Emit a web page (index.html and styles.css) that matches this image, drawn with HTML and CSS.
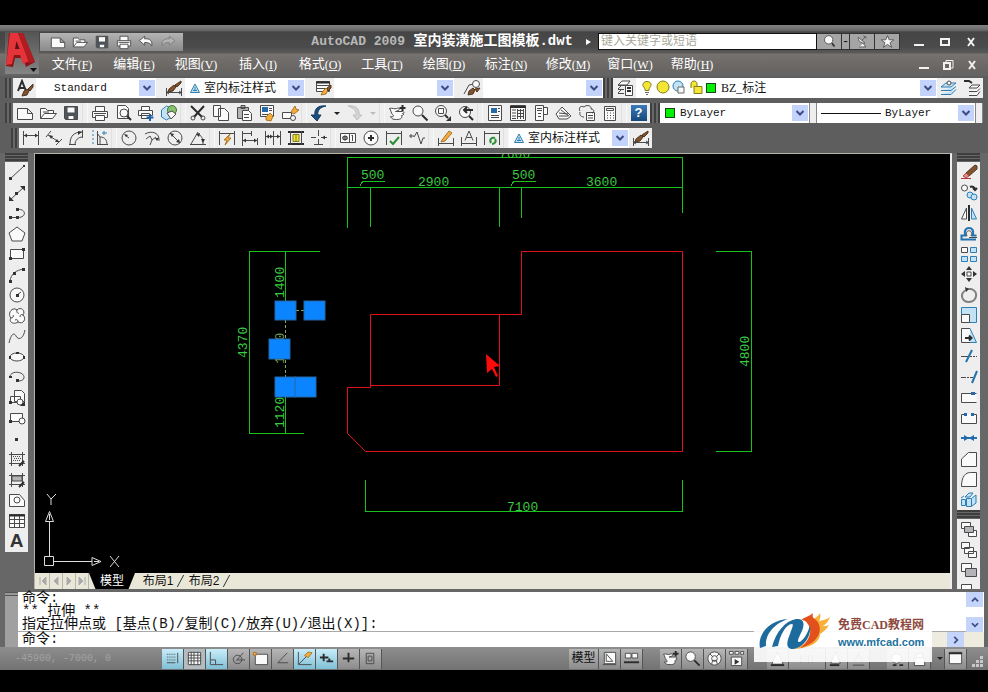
FILE: index.html
```html
<!DOCTYPE html>
<html lang="zh-CN">
<head>
<meta charset="utf-8">
<title>AutoCAD 2009 室内装潢施工图模板.dwt</title>
<link rel="stylesheet" href="styles.css">
</head>
<body>
<svg class="sprite" aria-hidden="true">
  <symbol id="new" viewBox="0 0 18 18"><path class="w" d="M1.500 4.500h10l5 5v6h-15zM11.500 4.500v5h5"/></symbol>
  <symbol id="open" viewBox="0 0 18 18"><path class="w" d="M1.500 14.500v-10h5l2 2h6v3M1.500 14.500l4-5h12l-4 5z"/><path d="M4 8h6"/></symbol>
  <symbol id="save" viewBox="0 0 18 18"><path class="d" d="M2.500 2.500h13v13h-12l-1-1z"/><path class="w" d="M5 3h8v6H5zM6 11.500h6v4H6z"/></symbol>
  <symbol id="print" viewBox="0 0 18 18"><path class="w" d="M4.500 7v-4.500h9v4.500M1.500 7.500h15v6h-15z"/><path class="w" d="M4.500 11.500h9v5h-9z"/><path d="M3 9.500h12"/></symbol>
  <symbol id="pan" viewBox="0 0 18 18"><path class="w" d="M1.500 4.500c3-1 5 1 7 0s4 0 2 2l-3 1h7c2 0 2 2 0 2 2 0 1 2-1 2 1 2 0 4-5 4-4 0-5-1-6-3 3 1 4-1 2-2-2-2-1-4-3-6z"/><path class="k" d="M14.500 1v6M11.500 4h6"/></symbol>
  <symbol id="lens" viewBox="0 0 18 18"><circle class="w" cx="7" cy="7" r="5"/><path class="k" d="M11 11l5.500 5.500"/></symbol>
  <symbol id="dimbrush" viewBox="0 0 18 18"><path d="M1.500 9v8M16.500 9v8M1.500 13.500h15M4 12l-2.500 1.500 2.500 1.500M14 12l2.500 1.500-2.500 1.500"/><path class="n" d="M4 10l5-4 2 2-3 4-5 1zM10 6l6-4v2l-4 4z"/></symbol>
  <symbol id="tri" viewBox="0 0 12 12"><path class="s" d="M6 2L1.500 10.500h9zM6 5v3.500M4 8.500h4"/></symbol>
  <symbol id="down" viewBox="0 0 16 16"><path class="chev" d="M4.500 6L8 9.500 11.500 6"/></symbol>
</svg>

<div class="app">
  <header class="header">
    <button class="logo" aria-label="菜单浏览器">
      <svg viewBox="0 0 34 42" aria-hidden="true">
        <path fill="#8d1518" d="M1 34L4 1h14l12 29-9 5-3-9h-8l-2 9z"/>
        <path fill="#e5333a" d="M1 33L5 1h8l11 28-6 3-3-9H9l-2 9z"/>
        <path fill="#541518" d="M10 17l1.500-8 3 8z"/>
        <path fill="#b01c22" d="M13 1h5l12 29-6 1z"/>
        <path fill="#111" d="M25 36h7l-3.500 4z"/>
      </svg>
    </button>
    <div class="bars">
      <div class="titlebar">
        <div class="quick">
          <button aria-label="新建"><svg class="i"><use href="#new"/></svg></button>
          <button aria-label="打开"><svg class="i"><use href="#open"/></svg></button>
          <button aria-label="保存"><svg class="i"><use href="#save"/></svg></button>
          <button aria-label="打印"><svg class="i"><use href="#print"/></svg></button>
          <button aria-label="放弃"><svg class="i" viewBox="0 0 18 18"><path class="w" d="M1.500 7.500l6-5v3c6-1 9 3 8 8-1-3-4-4-8-4v3z"/></svg></button>
          <button aria-label="重做"><svg class="i" viewBox="0 0 18 18"><path class="l" d="M16.500 7.500l-6-5v3c-6-1-9 3-8 8 1-3 4-4 8-4v3z"/></svg></button>
        </div>
        <h1 class="caption"><span>AutoCAD 2009</span> 室内装潢施工图模板.dwt</h1>
        <div class="search">
          <i class="play"></i>
          <input type="text" aria-label="搜索" placeholder="键入关键字或短语">
          <button aria-label="搜索"><svg class="i" viewBox="0 0 18 18"><circle class="w" cx="8" cy="7" r="5"/><path class="k" d="M12 11l3 4"/></svg></button>
          <button class="slim" aria-label="搜索范围">-</button>
          <button aria-label="通讯中心"><svg class="i" viewBox="0 0 18 18"><path class="w" d="M4 4c0 5 3 7 8 7zM5 15.500h8l-3-4"/><path d="M8 8l5-5M10 2l4 3"/></svg></button>
          <button aria-label="收藏夹"><svg class="i" viewBox="0 0 18 18"><path class="w" d="M9 2l2 5h5.500l-4.500 3.500 2 5.500-5-3.500L4 16l2-5.500L1.500 7H7z"/></svg></button>
        </div>
        <div class="winbtns">
          <button aria-label="最小化"><svg viewBox="0 0 12 12"><path d="M1 9h10"/></svg></button>
          <button aria-label="最大化"><svg viewBox="0 0 12 12"><path d="M2 3h8v6H2z"/></svg></button>
          <button aria-label="关闭"><svg viewBox="0 0 12 12"><path d="M3 2l6 8M9 2l-6 8"/></svg></button>
        </div>
      </div>
      <div class="menubar">
        <nav>
          <button>文件<span>(<u>F</u>)</span></button>
          <button>编辑<span>(<u>E</u>)</span></button>
          <button>视图<span>(<u>V</u>)</span></button>
          <button>插入<span>(<u>I</u>)</span></button>
          <button>格式<span>(<u>O</u>)</span></button>
          <button>工具<span>(<u>T</u>)</span></button>
          <button>绘图<span>(<u>D</u>)</span></button>
          <button>标注<span>(<u>N</u>)</span></button>
          <button>修改<span>(<u>M</u>)</span></button>
          <button>窗口<span>(<u>W</u>)</span></button>
          <button>帮助<span>(<u>H</u>)</span></button>
        </nav>
        <div class="winbtns doc">
          <button aria-label="最小化图形"><svg viewBox="0 0 12 12"><path d="M1 9h10"/></svg></button>
          <button aria-label="还原图形"><svg viewBox="0 0 12 12"><path class="thin" d="M4 3V1.500h7V9H9"/><path d="M2 4h6v6H2z"/></svg></button>
          <button aria-label="关闭图形"><svg viewBox="0 0 12 12"><path d="M3 2l6 8M9 2l-6 8"/></svg></button>
        </div>
      </div>
    </div>
  </header>

  <div class="toolbars">
    <div class="row">
      <i class="grip"></i>
      <div class="panel">
        <button aria-label="文字样式"><svg class="i" viewBox="0 0 18 18"><path class="k" d="M2 12L6 2l4 10M3.500 9h5"/><path class="n" d="M8 12l3-2 2 2-2 4-5 1zM12 10l5-5v3l-3 4z"/></svg></button>
        <label class="combo text"><select aria-label="文字样式"><option>Standard</option></select><svg class="drop"><use href="#down"/></svg></label>
      </div>
      <div class="panel gap">
        <button aria-label="标注样式"><svg class="i"><use href="#dimbrush"/></svg></button>
        <label class="combo"><svg class="mark"><use href="#tri"/></svg><select aria-label="标注样式"><option>室内标注样式</option></select><svg class="drop"><use href="#down"/></svg></label>
      </div>
      <div class="panel gap">
        <button aria-label="表格样式"><svg class="i" viewBox="0 0 18 18"><path class="w" d="M2.500 2.500h13v10h-13z"/><path class="k" d="M2 3.500h14"/><path d="M3 6.500h12M3 9.500h8"/><path class="o" d="M9 12l3-3 2 2-2 4-5 1z"/><path class="n" d="M13 9l4-3v3l-3 3z"/></svg></button>
        <label class="combo"><select aria-label="表格样式"><option></option></select><svg class="drop"><use href="#down"/></svg></label>
      </div>
      <div class="panel gap">
        <button aria-label="多重引线样式"><svg class="i" viewBox="0 0 18 18"><path d="M1 15L6 6l5-1"/><circle class="w" cx="13" cy="5" r="3.500"/><path class="n" d="M6 12l4-3 2 2-2 4-5 1zM12 10l5-1-3 4z"/></svg></button>
        <label class="combo"><select aria-label="多重引线样式"><option></option></select><svg class="drop"><use href="#down"/></svg></label>
      </div>
      <i class="grip wide"></i>
      <div class="panel grow">
        <button aria-label="图层特性管理器"><svg class="i" viewBox="0 0 18 18"><path class="w" d="M2 6l4-4h8l-3 4zM2 10l3-3M2 14l3-3M2 6.500h8M2 10.500h6M2 14.500h6"/><path class="w" d="M9.500 6.500h7v10h-7z"/><path class="k" d="M11 9h4M11 12h4"/></svg></button>
        <label class="combo layer">
          <svg class="states" viewBox="0 0 64 16" aria-hidden="true">
            <path class="y" d="M7 1.500c5 0 5 5 2 7v2H5v-2c-3-2-3-7 2-7z"/><path d="M5 12.500h4M6 14.500h2"/>
            <circle class="y" cx="23" cy="7" r="6"/>
            <circle class="s" cx="38" cy="6" r="5"/><path class="w" d="M38 7h6v6h-6z"/>
            <path class="y" d="M54 6.500h8v7h-8zM51 8V4c0-4 6-4 6 0v2"/>
          </svg>
          <i class="swatch"></i><select aria-label="图层"><option>BZ_标注</option></select><svg class="drop"><use href="#down"/></svg></label>
        <button aria-label="将对象的图层置为当前"><svg class="i" viewBox="0 0 18 18"><path class="s" d="M1 8l5-4h10l-5 4zM1 11.500h10l5-4M1 15.500h10l5-5"/><circle class="w" cx="9" cy="4" r="2"/></svg></button>
        <button aria-label="上一个图层"><svg class="i" viewBox="0 0 18 18"><path class="w" d="M6 9l3-3h8l-3 3zM6 12.500h8l3-3M6 16.500h8l3-4"/><path class="k" d="M1 2h5l3 2"/></svg></button>
      </div>
    </div>

    <div class="row">
      <i class="grip"></i>
      <div class="panel">
        <button aria-label="新建"><svg class="i"><use href="#new"/></svg></button>
        <button aria-label="打开"><svg class="i"><use href="#open"/></svg></button>
        <button aria-label="保存"><svg class="i"><use href="#save"/></svg></button>
        <i class="sep"></i>
        <button aria-label="打印"><svg class="i"><use href="#print"/></svg></button>
        <button aria-label="打印预览"><svg class="i" viewBox="0 0 18 18"><path class="w" d="M3.500 1.500h8l3 3v10h-11z"/><circle class="w" cx="10" cy="9" r="4"/><path class="k" d="M13 12l4 4"/></svg></button>
        <button aria-label="发布"><svg class="i" viewBox="0 0 18 18"><path class="w" d="M4.500 6V2.500h8V6M1.500 6.500h14v5h-14zM4.500 9.500h8v5h-8z"/><path class="bk" d="M13 10v7M9.500 13.500h7"/></svg></button>
        <button aria-label="三维 DWF"><svg class="i" viewBox="0 0 18 18"><path class="s" d="M1.500 6l5-4 5 2v9l-5 3-5-3z"/><circle class="g" cx="12" cy="6" r="4.500"/><path class="w" d="M7 9l5-2 4 3-5 5z"/></svg></button>
        <i class="sep"></i>
        <button aria-label="剪切"><svg class="i" viewBox="0 0 18 18"><path class="k" d="M2 2l11 11M15 2L5 13"/><circle cx="4" cy="14" r="2"/><circle cx="14" cy="14" r="2"/></svg></button>
        <button aria-label="复制"><svg class="i" viewBox="0 0 18 18"><path class="w" d="M1.500 1.500h7v11h-7zM6.500 4.500h6l4 4v8h-10z"/></svg></button>
        <button aria-label="粘贴"><svg class="i" viewBox="0 0 18 18"><path class="a" d="M2.500 3.500h11v11h-11zM6 1.500h4v3H6z"/><path class="w" d="M7.500 6.500h6l3 3v7h-9z"/><path d="M9 10.500h5M9 13.500h5"/></svg></button>
        <button aria-label="特性匹配"><svg class="i" viewBox="0 0 18 18"><path class="w" d="M2.500 1.500h13v11h-13z"/><path class="bf" d="M4 3h6v5H4z"/><path d="M11 4.500h3M11 6.500h3M4 10.500h8"/><path class="o" d="M8 13l4-4 3 3-2 5-5-1z"/></svg></button>
        <button aria-label="块编辑器"><svg class="i" viewBox="0 0 18 18"><path class="w" d="M1.500 8.500h9v6h-9z"/><circle class="w" cx="12" cy="14" r="2.500"/><path class="o" d="M10 8l4-6 1 3 3 1-5 4z"/></svg></button>
        <i class="sep"></i>
        <button aria-label="放弃"><svg class="i" viewBox="0 0 18 18"><path class="v" d="M16 2C8 1 4 5 5 11H1l6 6 4-6H8C7 7 10 3 16 2z"/></svg></button>
        <button class="arrow" aria-label="放弃列表"><i></i></button>
        <button aria-label="重做"><svg class="i off" viewBox="0 0 18 18"><path class="l" d="M2 2c8-1 12 3 11 9h3l-5 5-4-5h3C11 7 8 4 2 2z"/></svg></button>
        <button class="arrow off" aria-label="重做列表"><i></i></button>
        <i class="sep"></i>
        <button aria-label="实时平移"><svg class="i"><use href="#pan"/></svg></button>
        <button aria-label="实时缩放"><svg class="i"><use href="#lens"/></svg></button>
        <button aria-label="窗口缩放"><svg class="i" viewBox="0 0 18 18"><circle class="w" cx="7" cy="7" r="5.500"/><path d="M4.500 4.500h5v5h-5z"/><path class="k" d="M11 11l3 3"/><path class="f" d="M17 12v5h-5z"/></svg></button>
        <button aria-label="缩放上一个"><svg class="i" viewBox="0 0 18 18"><circle class="w" cx="8" cy="8" r="5.500"/><path class="k" d="M12 12l4 4M7 6h9M10 3L7 6l3 3"/></svg></button>
        <i class="sep"></i>
        <button aria-label="特性"><svg class="i" viewBox="0 0 18 18"><path class="w" d="M2.500 1.500h13v15h-13z"/><path class="bf" d="M5 4h6v5H5z"/><path d="M12 4.500h2M12 7.500h2M5 11.500h8M5 13.500h8"/></svg></button>
        <button aria-label="设计中心"><svg class="i" viewBox="0 0 18 18"><path class="w" d="M1.500 1.500h15v15h-15z"/><path class="k" d="M1 3h16"/><path d="M3 6h4M3 9h4M3 12h4M3 14.500h4M8 6.500h7M8 9.500h7M8 12.500h7M8.500 5v10M11.500 5v10M14.500 5v10"/></svg></button>
        <button aria-label="工具选项板"><svg class="i" viewBox="0 0 18 18"><path class="w" d="M3.500 1.500h8v15h-8zM11.500 3.500h4v7h-4z"/><path d="M5 4.500h5M5 6.500h5M6 9.500h3M6 12.500h3"/></svg></button>
        <button aria-label="图纸集管理器"><svg class="i" viewBox="0 0 18 18"><path class="w" d="M1 10l6-7 9 9-4 3H4zM4 12h9"/><path d="M4 9l9 1M6 6l8 6"/></svg></button>
        <button aria-label="标记集管理器"><svg class="i" viewBox="0 0 18 18"><path class="w" d="M8.500 8.500h8v8h-8z"/><path d="M2 7c-2-3 1-6 4-4 3-3 8-1 7 2 4 0 3 4 1 4M2 8c-1 4 2 5 4 5M10 11.500h5M10 14h5"/></svg></button>
        <button aria-label="快速计算器"><svg class="i" viewBox="0 0 18 18"><path class="w" d="M3.500 2.500h11v14h-11z"/><path d="M5.500 4.500h7v2h-7zM6 9h1M9 9h1M12 9h1M6 11.500h1M9 11.500h1M12 11.500h1M6 14h1M9 14h1M12 14h1"/></svg></button>
        <i class="sep"></i>
        <button class="help" aria-label="帮助"><b>?</b></button>
      </div>
      <i class="grip wide"></i>
      <div class="panel props">
        <label class="combo color"><i class="swatch"></i><select aria-label="颜色"><option>ByLayer</option></select><svg class="drop"><use href="#down"/></svg></label>
        <i class="rail"></i>
        <label class="combo line"><i class="stroke"></i><select aria-label="线型"><option>ByLayer</option></select><svg class="drop"><use href="#down"/></svg></label>
        <i class="rail"></i>
      </div>
    </div>

    <div class="row inset">
      <i class="grip"></i>
      <div class="panel">
        <button aria-label="线性"><svg class="i" viewBox="0 0 18 18"><path d="M1.500 2v14M16.500 2v14M2 6.500h14"/><path class="f" d="M2 6.500l3-2v4zM16 6.500l-3-2v4z"/></svg></button>
        <button aria-label="对齐"><svg class="i" viewBox="0 0 18 18"><path d="M1 8l5-6M11 16l6-6M3 6l11 7"/><path class="f" d="M4 6l4 1-2 3zM14 13l-4 0 2-3z"/></svg></button>
        <button aria-label="弧长"><svg class="i" viewBox="0 0 18 18"><path d="M2 15C2 7 6 3 14 3M7 16c0-5 3-8 8-8M1 15.500h7M14.500 1v8"/><path class="f" d="M14 3l-4-1v4z"/></svg></button>
        <button aria-label="坐标"><svg class="i" viewBox="0 0 18 18"><path class="s" d="M1 2h2M1 6h2M1 10h2M1 14h2M13 2v4M11 4h5"/><path d="M6.500 2v14M6 15.500h11M6 4l3 4M9 8c5 0 7 3 7 8M9 8v7"/></svg></button>
        <i class="sep"></i>
        <button aria-label="半径"><svg class="i" viewBox="0 0 18 18"><circle cx="9" cy="9" r="7"/><path d="M5 6l4 3"/><path class="f" d="M4 5l4 1-2 2z"/></svg></button>
        <button aria-label="折弯"><svg class="i" viewBox="0 0 18 18"><path d="M2 5c7-4 15-1 14 7M3 10l4-3 2 4 4-3"/><path class="f" d="M16 9l-4 0 2 3z"/><path d="M9 11l-2 5"/></svg></button>
        <button aria-label="直径"><svg class="i" viewBox="0 0 18 18"><circle cx="9" cy="9" r="7"/><path d="M4 4l10 10"/><path class="f" d="M4 4l4 1-2 3zM14 14l-4-1 3-3z"/></svg></button>
        <button aria-label="角度"><svg class="i" viewBox="0 0 18 18"><path d="M1 15.500h16M2 15L9 3M8 5c5 1 6 5 6 10"/><path class="f" d="M14 14l-2-4h4zM7 5l4-1-1 4z"/></svg></button>
        <i class="sep"></i>
        <button aria-label="快速标注"><svg class="i" viewBox="0 0 18 18"><path d="M1.500 2v14M16.500 2v14M2 4.500h14"/><path class="o" d="M12 5l-6 6h3l-2 5 6-7h-3z"/></svg></button>
        <button aria-label="基线"><svg class="i" viewBox="0 0 18 18"><path d="M1.500 2v15M10.500 2v5M16.500 9v7M2 4.500h8M2 11.500h14"/><path class="f" d="M2 11.500l3-2v4zM16 11.500l-3-2v4z"/></svg></button>
        <button aria-label="连续"><svg class="i" viewBox="0 0 18 18"><path d="M1.500 2v14M9.500 2v14M16.500 2v14M2 7.500h14"/><path class="f" d="M2 7.500l3-2v4zM9 7.500l-3-2v4zM16 7.500l-3-2v4z"/></svg></button>
        <button aria-label="标注间距"><svg class="i" viewBox="0 0 18 18"><path class="k" d="M1 3h16M1 15h16"/><path d="M3.500 2v14M14.500 2v14"/><path class="y" d="M6 5.500h6v7H6zM9 6v6"/></svg></button>
        <button aria-label="标注打断"><svg class="i" viewBox="0 0 18 18"><path d="M8.500 1v6M8.500 10v6M1 8.500h5M11 8.500h6M4 15.500h9"/><path class="f" d="M12 8.500l3-2v4z"/></svg></button>
        <i class="sep"></i>
        <button aria-label="公差"><svg class="i" viewBox="0 0 18 18"><path class="w" d="M1.500 4.500h15v9h-15zM10.500 5v8"/><path d="M3 9h6M6 6v6M4 7.500h4v3H4zM12.500 7l1-1v6"/></svg></button>
        <button aria-label="圆心标记"><svg class="i" viewBox="0 0 18 18"><circle class="w" cx="9" cy="9" r="7"/><path class="k" d="M9 6v6M6 9h6"/></svg></button>
        <button aria-label="检验"><svg class="i" viewBox="0 0 18 18"><path d="M1.500 2v14M16.500 2v14M2 4.500h14"/><path class="gk" d="M5 12l3 3 6-7"/></svg></button>
        <button aria-label="折弯线性"><svg class="i" viewBox="0 0 18 18"><path d="M1 7h5M3 5v4M6 8l3-5 4 12 2-6h2"/></svg></button>
        <i class="sep"></i>
        <button aria-label="编辑标注"><svg class="i" viewBox="0 0 18 18"><path d="M1.500 9v8M16.500 9v8M2 14.500h14"/><path class="o" d="M5 11l7-9 3 2-7 8-4 1z"/></svg></button>
        <button aria-label="编辑标注文字"><svg class="i" viewBox="0 0 18 18"><path d="M1.500 8v9M16.500 8v9M2 14.500h14M5 11.500L9 2l4 9.500M6.500 8.500h5"/></svg></button>
        <button aria-label="标注更新"><svg class="i" viewBox="0 0 18 18"><path d="M1.500 2v14M16.500 2v14M2 4.500h14"/><path class="gk" d="M8 14c-2-4 1-6 4-5M12 10c2 3-1 5-3 5"/></svg></button>
        <i class="sep"></i>
        <label class="combo"><svg class="mark"><use href="#tri"/></svg><select aria-label="当前标注样式"><option>室内标注样式</option></select><svg class="drop"><use href="#down"/></svg></label>
        <button aria-label="标注样式管理"><svg class="i"><use href="#dimbrush"/></svg></button>
      </div>
    </div>
  </div>

  <main class="work">
    <div class="side">
      <i class="hgrip"></i>
      <div class="vpanel draw">
        <button aria-label="直线"><svg class="i" viewBox="0 0 18 18"><path d="M2 16L16 3"/><path class="f" d="M1 14h3v3H1zM15 2h2v2h-2z"/></svg></button>
        <button aria-label="构造线"><svg class="i" viewBox="0 0 18 18"><path d="M2 16L16 3"/><path class="f" d="M1 12v5h5zM17 2h-5l5 5zM7 8h3v3H7z"/></svg></button>
        <button aria-label="多段线"><svg class="i" viewBox="0 0 18 18"><path d="M2 13.500h8c9 0 8-9 0-8"/><path class="f" d="M1 12h3v3H1zM8 12h3v3H8zM8 4h3v3H8z"/></svg></button>
        <button aria-label="正多边形"><svg class="i" viewBox="0 0 18 18"><path class="w" d="M9 2l8 6-3 8H4L1 8z"/></svg></button>
        <button aria-label="矩形"><svg class="i" viewBox="0 0 18 18"><path class="w" d="M2.500 4.500h13v9h-13z"/><path class="f" d="M1 12h3v3H1zM14 3h3v3h-3z"/></svg></button>
        <button aria-label="圆弧"><svg class="i" viewBox="0 0 18 18"><path d="M2 15C3 8 8 4 16 3"/><path class="f" d="M1 14h3v3H1zM5 6h3v3H5zM14 2h3v3h-3z"/></svg></button>
        <button aria-label="圆"><svg class="i" viewBox="0 0 18 18"><circle class="w" cx="9" cy="9" r="7"/><path d="M9 9l4-3"/><path class="f" d="M8 8h3v3H8z"/></svg></button>
        <button aria-label="修订云线"><svg class="i" viewBox="0 0 18 18"><path class="w" d="M9 3c4-4 9 1 6 5 4 4 0 10-5 7-4 3-10 0-7-4-4-4 1-12 6-8z"/><path d="M9 3c-1 2 1 4 2 3M15 8c-2-1-3 0-3 2M10 15c0-2-1-3-3-2M3 11c2 0 3-2 2-3"/></svg></button>
        <button aria-label="样条曲线"><svg class="i" viewBox="0 0 18 18"><path d="M1 16C3 7 6 5 8 9s7 4 9-6"/></svg></button>
        <button aria-label="椭圆"><svg class="i" viewBox="0 0 18 18"><ellipse class="w" cx="9" cy="9" rx="7" ry="4"/><path class="f" d="M1 8h2v3H1zM15 8h2v3h-2zM8 4h3v2H8z"/></svg></button>
        <button aria-label="椭圆弧"><svg class="i" viewBox="0 0 18 18"><path d="M2 9c0-7 15-6 14 1-1 3-4 3-7 3"/><path class="f" d="M1 8h3v2H1zM8 11h3v3H8z"/></svg></button>
        <button aria-label="插入块"><svg class="i" viewBox="0 0 18 18"><path class="w" d="M6.500 1.500h7l3 3v8h-10zM2.500 7.500h10v6h-10z"/><circle class="w" cx="12" cy="13" r="3"/><path class="f" d="M1 12h3v3H1zM17 12v5h-5z"/></svg></button>
        <button aria-label="创建块"><svg class="i" viewBox="0 0 18 18"><path class="w" d="M2.500 4.500h12v8h-12z"/><circle class="w" cx="14" cy="12" r="3"/><path class="f" d="M1 11h3v3H1z"/></svg></button>
        <button aria-label="点"><svg class="i" viewBox="0 0 18 18"><path class="f" d="M7 8h3v3H7z"/></svg></button>
        <button aria-label="图案填充"><svg class="i" viewBox="0 0 18 18"><path d="M1 4.500h16M1 13.500h16M3.500 2v14M14.500 2v14"/><path class="dots" d="M5 6.500h8M6 8.500h8M5 10.500h8"/><path class="k" d="M16 11l-5 5"/></svg></button>
        <button aria-label="渐变色"><svg class="i" viewBox="0 0 18 18"><path class="a" d="M4 5h10v5H4z"/><path d="M1 4.500h16M1 13.500h16M3.500 2v14M14.500 2v14"/><path class="k" d="M16 11l-5 5"/></svg></button>
        <button aria-label="面域"><svg class="i" viewBox="0 0 18 18"><path class="w" d="M1.500 3.500h10l5 6v6h-15z"/><circle class="w" cx="9" cy="9" r="3"/></svg></button>
        <button aria-label="表格"><svg class="i" viewBox="0 0 18 18"><path class="w" d="M1.500 2.500h15v13h-15z"/><path class="k" d="M1 3.500h16"/><path d="M2 7.500h14M2 11.500h14M6.500 4v11M11.500 4v11"/></svg></button>
        <button class="mtext" aria-label="多行文字">A</button>
      </div>
    </div>

    <section class="viewport">
      <svg class="drawing" role="img" aria-label="户型平面图">
        <g transform="translate(-35 -154)">
          <g class="dim">
            <path d="M347.500 228V157.500H682.500V213M347.500 187.500H682.500M370.500 187V227M499.500 187V227M521.500 187V218M360 186l3-5h22M511 186l3-5h22"/>
            <path d="M320 251.500H249.500V433.500H304M285.500 251V301M285.500 397V433"/>
            <path d="M716 251.500H751.500V451.500H716M365.500 480V511.500H682.500V480"/>
            <path class="faint" d="M285.500 320V378M296 310.500h9"/>
            <text x="499" y="158">7600</text>
            <text x="361" y="179">500</text>
            <text x="418" y="186">2900</text>
            <text x="512" y="179">500</text>
            <text x="586" y="186">3600</text>
            <text x="507" y="511">7100</text>
            <text transform="translate(284 298) rotate(-90)">1400</text>
            <text class="soft" transform="translate(284 364) rotate(-90)">1850</text>
            <text transform="translate(284 428) rotate(-90)">1120</text>
            <text transform="translate(247 358) rotate(-90)">4370</text>
            <text transform="translate(749 367) rotate(-90)">4800</text>
          </g>
          <path class="wall" d="M521.500 251.500H682.500V451.500H365.500L347.500 433.500V387.500H370.500V314.500H521.500zM370.500 385.500H499.500V314.500"/>
          <g class="handles">
            <rect x="275" y="301" width="21" height="19"/><rect x="304" y="301" width="21" height="19"/>
            <rect x="269" y="339" width="21" height="20"/><rect x="275" y="377" width="21" height="20"/><rect x="295" y="377" width="21" height="20"/>
          </g>
          <path class="pointer" d="M486 354l14 12-6 1 4 9-2 1-4-8-5 4z"/>
          <g class="ucs">
            <path d="M44.500 556.500h9v9h-9zM49.500 556V522M54 561.500H92M49.500 511.500l4 10h-8zM101 561.500l-9-4v8zM49.500 514v6M94 561.500h5"/>
            <path d="M47 494l4 5v6M56 494l-5 5M110 556l9 11M119 556l-9 11"/>
          </g>
        </g>
      </svg>
      <div class="tabs">
        <button class="nav" aria-label="第一个布局"><svg viewBox="0 0 12 12"><path d="M3 2v8M9 2L5 6l4 4z"/></svg></button>
        <button class="nav" aria-label="上一个布局"><svg viewBox="0 0 12 12"><path d="M8 2L4 6l4 4z"/></svg></button>
        <button class="nav" aria-label="下一个布局"><svg viewBox="0 0 12 12"><path d="M4 2l4 4-4 4z"/></svg></button>
        <button class="nav" aria-label="最后一个布局"><svg viewBox="0 0 12 12"><path d="M3 2l4 4-4 4zM9 2v8"/></svg></button>
        <button class="tab on">模型</button>
        <button class="tab">布局1</button>
        <button class="tab">布局2</button>
      </div>
    </section>

    <div class="side">
      <i class="hgrip"></i>
      <div class="vpanel modify">
        <button aria-label="删除"><svg class="i" viewBox="0 0 18 18"><path class="n" d="M6 10l9-8 2 1v3l-8 7z"/><path class="r" d="M6 10l3 3-3 2-3-2z"/><path class="rk" d="M1 15.500h10"/></svg></button>
        <button aria-label="复制对象"><svg class="i" viewBox="0 0 18 18"><circle class="w" cx="4.500" cy="5" r="3"/><circle class="s" cx="10" cy="12" r="3"/><circle class="s" cx="14" cy="14" r="3"/><path class="k" d="M10 4c2-1 5 0 5 3M13 5l2 2 2-2"/></svg></button>
        <button aria-label="镜像"><svg class="i" viewBox="0 0 18 18"><path class="w" d="M6.500 4v11h-5z"/><path class="s" d="M11.500 4v11h5z"/><path class="k" d="M9 1v16"/></svg></button>
        <button aria-label="偏移"><svg class="i" viewBox="0 0 18 18"><path class="b" d="M16 15.500H1.500v-4h4c-4-10 11-10 7 0h4"/><path d="M17 13.500H9M7 12c-3-7 7-7 4 0"/></svg></button>
        <button aria-label="阵列"><svg class="i" viewBox="0 0 18 18"><path class="w" d="M1.500 2.500h6v5h-6z"/><path class="s" d="M10.500 2.500h6v5h-6zM1.500 11.500h6v5h-6zM10.500 11.500h6v5h-6z"/></svg></button>
        <button aria-label="移动"><svg class="i" viewBox="0 0 18 18"><path class="w" d="M7 7h4v4H7z"/><path class="f" d="M9 1l3 4H6zM9 17l3-4H6zM1 9l4-3v6zM17 9l-4-3v6z"/></svg></button>
        <button aria-label="旋转"><svg class="i" viewBox="0 0 18 18"><path class="h" d="M6 4c-7 4-4 12 3 12 8 0 10-11 2-13H7"/><path class="f" d="M5 1l4 2-3 3z"/></svg></button>
        <button aria-label="缩放"><svg class="i" viewBox="0 0 18 18"><path class="s" d="M1.500 1.500h15v15h-15z"/><path class="w" d="M1.500 8.500h8v8h-8z"/></svg></button>
        <button aria-label="拉伸"><svg class="i" viewBox="0 0 18 18"><path class="w" d="M10 1.500H1.500v14H10"/><path class="s" d="M10 1.500l6.500 14H10"/><path class="k" d="M5 11h6M9 8.500l2.500 2.500L9 13.500"/></svg></button>
        <button aria-label="修剪"><svg class="i" viewBox="0 0 18 18"><path class="b" d="M6 15l6-12"/><path d="M1 9.500h7M10 9.500h2M13 9.500h2M16 9.500h1"/></svg></button>
        <button aria-label="延伸"><svg class="i" viewBox="0 0 18 18"><path class="b" d="M12 15l5-12"/><path d="M1 9.500h5M7 9.500h2M10 9.500h3"/></svg></button>
        <button aria-label="打断于点"><svg class="i" viewBox="0 0 18 18"><path class="w" d="M16.500 14.500h-15v-9h15"/><path class="bf" d="M11 4h4v3h-4z"/></svg></button>
        <button aria-label="打断"><svg class="i" viewBox="0 0 18 18"><path class="w" d="M6 5.500H1.500v9h15v-9H12"/><path class="bf" d="M4 4h3v3H4zM11 4h3v3h-3z"/></svg></button>
        <button aria-label="合并"><svg class="i" viewBox="0 0 18 18"><path class="b" d="M1 9h16"/><path class="bf" d="M4 6l5 3-5 3zM14 6L9 9l5 3z"/></svg></button>
        <button aria-label="倒角"><svg class="i" viewBox="0 0 18 18"><path class="w" d="M1.500 16.500V9l7-6.500h8v14z"/></svg></button>
        <button aria-label="圆角"><svg class="i" viewBox="0 0 18 18"><path class="w" d="M1.500 16.500c0-10 4-14 9-14h6v14z"/></svg></button>
        <button aria-label="分解"><svg class="i" viewBox="0 0 18 18"><path class="s" d="M1.500 8.500h4v6h-4zM6.500 7.500h5v8h-5zM12 7l4-3v8l-4 3M5 6l4-4h4l-3 4zM1 7l3-2"/></svg></button>
      </div>
      <i class="hgrip"></i>
      <div class="vpanel order">
        <button aria-label="前置"><svg class="i" viewBox="0 0 18 18"><path class="w" d="M1.500 2.500h9v6h-9zM8.500 10.500h8v6h-8z"/><path class="a" d="M4.500 6.500h9v6h-9z"/></svg></button>
        <button aria-label="后置"><svg class="i" viewBox="0 0 18 18"><path class="w" d="M4.500 6.500h9v6h-9zM1.500 1.500h8v6h-8zM8.500 10.500h8v6h-8z"/></svg></button>
        <button aria-label="置于对象之上"><svg class="i" viewBox="0 0 18 18"><path class="w" d="M1.500 2.500h10v8h-10z"/><path class="a" d="M5.500 7.500h11v8h-11z"/></svg></button>
        <button aria-label="置于对象之下"><svg class="i" viewBox="0 0 18 18"><path class="w" d="M1.500 2.500h10v8h-10z"/></svg></button>
      </div>
    </div>
  </main>

  <section class="command">
    <i class="cgrip"></i>
    <div class="history">
      <p>命令:</p>
      <p>** 拉伸 **</p>
      <p>指定拉伸点或 [基点(B)/复制(C)/放弃(U)/退出(X)]:</p>
    </div>
    <div class="vscroll">
      <button aria-label="向上滚动"><svg viewBox="0 0 16 16"><path class="chev" d="M4.500 9.500L8 6l3.500 3.500"/></svg></button>
      <button aria-label="向下滚动"><svg><use href="#down"/></svg></button>
    </div>
    <label class="prompt">命令: <input type="text" aria-label="命令"></label>
    <div class="hscroll"><button aria-label="向右滚动"><svg viewBox="0 0 16 16"><path class="chev" d="M6 4.500L9.500 8 6 11.500"/></svg></button></div>
  </section>

  <footer class="status">
    <output>-45900, -7000, 0</output>
    <div class="toggles">
      <button class="on" aria-label="捕捉"><svg class="i" viewBox="0 0 18 18"><path class="dots" d="M3 4.500h9M3 7.500h9M3 10.500h9"/><path d="M14.500 3v11M3 13.500h9"/></svg></button>
      <button class="lit" aria-label="栅格"><svg class="i" viewBox="0 0 18 18"><path class="w" d="M2.500 2.500h13v13h-13z"/><path d="M2 5.500h14M2 8.500h14M2 11.500h14M5.500 2v14M8.500 2v14M12.500 2v14"/></svg></button>
      <button class="on" aria-label="正交"><svg class="i" viewBox="0 0 18 18"><path d="M2.500 2v13.500H16M3 10.500h5v5"/></svg></button>
      <button aria-label="极轴"><svg class="i" viewBox="0 0 18 18"><circle cx="8" cy="10" r="4.500"/><path d="M7 11l7-8M7 10.500h9"/></svg></button>
      <button aria-label="对象捕捉"><svg class="i" viewBox="0 0 18 18"><path class="w" d="M3.500 4.500h13v11h-13z"/><path class="o" d="M1.500 2.500h3v3h-3z"/></svg></button>
      <button aria-label="对象追踪"><svg class="i" viewBox="0 0 18 18"><path d="M14 3L4 13.500h11"/></svg></button>
      <button class="on" aria-label="动态 UCS"><svg class="i" viewBox="0 0 18 18"><path d="M2.500 2v13.500h14M3 15l8-8"/><path class="o" d="M9 6l4-4 4 1-4 5z"/></svg></button>
      <button class="on" aria-label="动态输入"><svg class="i" viewBox="0 0 18 18"><path class="k" d="M2 8h9M6 4v8M9 12h7M12 9v4"/></svg></button>
      <button aria-label="线宽"><svg class="i" viewBox="0 0 18 18"><path class="k" d="M3 9h12M9 3v10"/></svg></button>
      <button aria-label="快捷特性"><svg class="i" viewBox="0 0 18 18"><path d="M4.500 3.500h8v11h-8zM6.500 6.500h4v5h-4z"/></svg></button>
    </div>
    <div class="views">
      <button class="name">模型</button>
      <button aria-label="模型空间"><svg class="i" viewBox="0 0 18 18"><path class="w" d="M3.500 2.500h12v12h-12z"/><path d="M2 15.500h14M5.500 4v8h7z"/></svg></button>
      <button aria-label="快速查看布局"><svg class="i" viewBox="0 0 18 18"><path class="w" d="M2.500 3.500h6v5h-6zM9.500 3.500h6v5h-6z"/><path class="k" d="M1 13h16"/></svg></button>
      <i class="space"></i>
      <button aria-label="平移"><svg class="i"><use href="#pan"/></svg></button>
      <button aria-label="缩放"><svg class="i"><use href="#lens"/></svg></button>
      <button aria-label="控制盘"><svg class="i" viewBox="0 0 18 18"><circle class="w" cx="9" cy="9" r="7"/><circle class="w" cx="9" cy="9" r="3"/><path d="M4 4l3 3M14 4l-3 3M6 15l1-4h4l1 4"/></svg></button>
      <button aria-label="ShowMotion"><svg class="i" viewBox="0 0 18 18"><path class="w" d="M1.500 1.500h4v3h-4zM7.500 1.500h4v3h-4zM13.500 1.500h3v3h-3zM3.500 7.500h11v9h-11z"/><path class="f" d="M7 9.500l5 3-5 3z"/></svg></button>
    </div>
    <div class="scales">
      <button aria-label="注释比例"><svg class="i" viewBox="0 0 18 18"><path class="w" d="M9 2l6 13H3z"/><path class="k" d="M2 16h14"/></svg></button>
      <button class="ratio" aria-label="比例列表"><svg class="i" viewBox="0 0 18 18"><path d="M2 5v8M6 7h1M6 11h1M10 5v8M14 5v8"/></svg></button>
      <button aria-label="注释可见性"><svg class="i" viewBox="0 0 18 18"><path class="w" d="M8 2l5 12H3z"/><path class="k" d="M2 16h10"/></svg></button>
      <button aria-label="自动缩放"><svg class="i" viewBox="0 0 18 18"><path d="M3 16h12M5 12l4-8 4 8"/></svg></button>
      <i class="space"></i>
      <button aria-label="工作空间"><svg class="i" viewBox="0 0 18 18"><circle class="w" cx="8" cy="9" r="5"/><path class="k" d="M4 16h4M11 16h4"/></svg></button>
      <button aria-label="锁定"><svg class="i" viewBox="0 0 18 18"><path class="w" d="M3.500 8.500h11v8h-11zM6 8V4h6v4"/></svg></button>
    </div>
    <div class="tray">
      <button class="arrow" aria-label="状态栏菜单"><i></i></button>
      <button aria-label="全屏显示"><svg class="i" viewBox="0 0 18 18"><path class="w" d="M2.500 2.500h13v12h-13z"/><path class="k" d="M2 3.500h14"/></svg></button>
      <svg class="sizer" viewBox="0 0 12 12" aria-hidden="true"><path d="M8 0h3v3H8zM4 4h3v3H4zM8 4h3v3H8zM0 8h3v3H0zM4 8h3v3H4zM8 8h3v3H8z"/></svg>
    </div>
    <aside class="stamp">
      <svg viewBox="0 0 74 40" aria-hidden="true">
        <path fill="#f7b03a" d="M48 8C55 8 60 5 62 1c1 4 0 6-1 8 4-1 7-1 11-4-2 5-4 7-7 9 2 0 4 0 6-1-3 5-6 7-9 9 0 8-9 14-26 15 9-3 19-10 19-19 0-4-2-8-7-10z"/>
        <path fill="#e2501b" d="M43 8c4-3 9-4 12-7-1 4 0 5 3 7 8 8 4 23-16 28 7-5 13-15 9-22-2-4-4-6-8-6z"/>
        <path fill="#1d6b9c" d="M2 36C-1 22 12 8 30 7c-12 4-23 14-22 27z"/>
        <path fill="#1d6b9c" d="M14 35C18 20 27 9 38 7c9-1 9 6 5 14-3 6-4 9-2 9 3 0 9-8 11-17 2 10-6 23-17 24-8 0-6-8-3-15 2-6 4-10 2-10-6 0-12 11-14 22z"/>
      </svg>
      <p><strong>免费CAD教程网</strong><b>www.mfcad.com</b></p>
    </aside>
  </footer>
</div>
</body>
</html>
```
FILE: styles.css
```css
* { box-sizing: border-box; }

body {
  margin: 0;
  min-height: 100vh;
  padding: 25px 0 22px;
  display: flex;
  flex-direction: column;
  background: #000;
  color: #111;
  font: 12px/16px "Liberation Mono", "Noto Sans CJK SC", monospace;
}

button, input, select {
  margin: 0;
  padding: 0;
  border: 0;
  background: none;
  color: inherit;
  font: inherit;
  border-radius: 0;
}

button {
  display: flex;
  align-items: center;
  justify-content: center;
  flex: none;
  white-space: nowrap;
}

p, h1 { margin: 0; }
i { display: block; flex: none; font-style: normal; }
.sprite { position: absolute; width: 0; height: 0; }

/* Icon strokes and fills */
.i { width: 18px; height: 18px; flex: none; fill: none; stroke: #4a4a4a; stroke-width: 1; }
.w { fill: #fafafa; }
.d { fill: #4e565e; }
.a { fill: #b4b4b8; }
.l { fill: #b4b4b4; stroke: #7c7c7c; }
.off .l, .off.i .l { fill: #d4d4d4; stroke: #c0c0c0; }
.k { stroke: #2c2c2c; stroke-width: 2; }
.f { fill: #333; stroke: none; }
.n { fill: #80532e; stroke: #513620; }
.s { fill: #c3e2f5; stroke: #2d7fb5; }
.b { stroke: #2272ae; stroke-width: 2; }
.bf { fill: #2569a8; stroke: none; }
.bk { stroke: #1d62ac; stroke-width: 2; }
.v { fill: #1d4e80; stroke: #16395c; }
.o { fill: #f3ab3b; stroke: #a8762b; }
.y { fill: #f4e733; stroke: #817c1d; }
.g { fill: #86c06e; stroke: #42753a; }
.gk { stroke: #2c8f35; stroke-width: 2; }
.r { fill: #e28b84; stroke: #b05048; }
.rk { stroke: #b0383a; }
.h { stroke: #808080; stroke-width: 2; }
.dots { stroke-dasharray: 1 1; }
.chev { fill: none; stroke: #3c4b83; stroke-width: 2; }

.app {
  flex: 1;
  display: flex;
  flex-direction: column;
  background: #676767;
}

/* Header */
.header {
  display: flex;
  padding-left: 5px;
  background: linear-gradient(#828282, #6c6c6c 5px, #454545 7px, #4b4b4b 22px, #5a5a5a 28px, #757270 29px, #686563 45px, #646464);
}
.logo { width: 34px; height: 42px; margin-top: 7px; background: linear-gradient(#555, #858585); }
.logo svg { width: 34px; height: 42px; }
.bars { flex: 1; min-width: 0; }
.titlebar { display: flex; align-items: center; height: 28px; padding: 5px 4px 0 1px; }
.quick { display: flex; width: 143px; height: 18px; padding-left: 7px; background: linear-gradient(#b4b4b4, #8a8a8a); }
.quick button { width: 22px; }
.quick .i { width: 16px; height: 16px; }
.caption { flex: 1; padding-right: 13px; text-align: right; color: #fff; font-size: 14px; font-weight: bold; line-height: 18px; white-space: nowrap; }
.caption span { color: #b8b8b8; font-size: 13px; }
.search { display: flex; align-items: center; height: 17px; }
.play { border: 3px solid transparent; border-left: 5px solid #fff; margin-right: 4px; }
.search input { width: 219px; height: 17px; border: 1px solid #111; background: #fff; padding-left: 2px; }
.search input::placeholder { color: #a8a898; opacity: 1; }
.search button { width: 25px; height: 17px; background: #a5a5a5; border: 1px solid #333; border-left: 0; }
.search button.slim { width: 8px; }
.search .i { width: 15px; height: 15px; }
.winbtns { display: flex; padding-left: 6px; }
.winbtns button { width: 26px; height: 20px; }
.winbtns svg { width: 12px; height: 12px; fill: none; stroke: #f2f2f2; stroke-width: 2; }
.winbtns .thin { stroke-width: 1; }
.menubar { display: flex; justify-content: space-between; align-items: center; height: 23px; padding: 0 4px 0 2px; color: #fff; font-size: 13px; }
.menubar nav { display: flex; }
.menubar nav button { width: 62px; height: 20px; }
.menubar nav span { font-family: "Liberation Serif", serif; font-size: 12px; }
.winbtns.doc button { width: 24px; }

/* Toolbars */
.toolbars { display: flex; flex-direction: column; gap: 5px; padding: 2px 0 5px; background: #5e5e5e; }
.row { display: flex; height: 20px; padding: 0 5px; }
.row.inset { padding-left: 11px; }
.grip { width: 8px; background: repeating-linear-gradient(90deg, #3f3f3f 0 2px, #686868 2px 4px); }
.grip.wide { width: 10px; }
.panel { display: flex; align-items: center; background: #eee; }
.panel.gap { padding-left: 6px; }
.panel.grow { flex: 1; }
.panel.props { width: 323px; }
.panel button { width: 23px; height: 20px; }
.sep { width: 6px; height: 20px; border-right: 1px solid #f8f8f8; border-left: 1px solid #e0e0e0; }
.panel button.arrow { width: 13px; }
.arrow i { border: 3px solid transparent; border-top-color: #222; border-bottom: 0; }
.arrow.off i { border-top-color: #bbb; }
.help b { width: 16px; height: 16px; background: linear-gradient(#3a7bb8, #174879); color: #fff; font: bold 13px/16px "Liberation Sans", sans-serif; }
.combo { display: flex; align-items: center; width: 120px; height: 20px; background: #fff; }
.combo select { appearance: none; flex: 1; min-width: 0; height: 20px; font-size: 12px; font-family: "Liberation Serif", "Noto Sans CJK SC", serif; }
.combo.text select, .combo.color select, .combo.line select { font: 11px/16px "Liberation Mono", monospace; }
.combo.text { padding-left: 18px; }
.drop { width: 16px; height: 16px; flex: none; margin: 0 1px; background: #c3d3fb; }
.mark { width: 12px; height: 12px; margin: 0 3px 0 4px; flex: none; }
.combo.layer { flex: 1; }
.states { width: 64px; height: 16px; margin: 0 2px 0 4px; fill: none; stroke: #666; flex: none; }
.swatch { width: 10px; height: 10px; background: #00f000; border: 1px solid #164616; margin-right: 5px; }
.combo.color { width: 149px; padding-left: 5px; }
.combo.line { flex: 1; padding-left: 4px; }
.stroke { width: 60px; height: 1px; margin-right: 4px; background: #111; }
.rail { width: 8px; height: 20px; border-left: 1px solid #888; border-right: 1px solid #888; }

/* Work area */
.work { flex: 1; display: flex; min-height: 0; padding: 0 8px 0 5px; }
.side { width: 23px; display: flex; flex-direction: column; overflow: hidden; flex: none; height: 436px; }
.hgrip { height: 9px; background: repeating-linear-gradient(#3e3e3e 0 2px, #666 2px 3px); }
.vpanel { display: grid; grid-auto-rows: 1fr; background: #eee; flex: none; }
.vpanel.draw { height: 390px; }
.vpanel.modify { height: 348px; }
.vpanel.order { height: 82px; }
.vpanel button { height: 20px; }
.mtext { font: bold 19px/20px "Liberation Sans", sans-serif; color: #333; }
.viewport { flex: 1; display: flex; flex-direction: column; min-width: 0; margin: 0 5px 0 6px; border: 1px solid #b4b4ac; border-right: 2px solid #eee; border-bottom: 0; }
.drawing { flex: 1; width: 100%; min-height: 0; background: #000; display: block; }
.dim path { fill: none; stroke: #18c21d; shape-rendering: crispEdges; }
.dim .faint { stroke-dasharray: 3 2; stroke: #7fae5c; }
.dim text { fill: #3cc843; font: 13px "Liberation Mono", monospace; }
.dim .soft { fill: #6d9a56; }
.wall { fill: none; stroke: #e0101c; }
.handles rect { fill: #0a84ff; stroke: #2766a4; stroke-width: 1; }
.pointer { fill: #fb0b0b; }
.ucs path { fill: none; stroke: #ddd; }
.tabs { display: flex; height: 16px; background: #e9e7d8; padding-left: 2px; flex: none; }
.nav { width: 13px; border-right: 1px solid #b8b6a8; }
.nav svg { width: 12px; height: 12px; fill: #aaa; stroke: #aaa; }
.tab { position: relative; width: 46px; font-size: 12px; font-family: "Liberation Sans", "Noto Sans CJK SC", sans-serif; }
.tab::after { content: ""; position: absolute; right: 0; top: 2px; width: 1px; height: 12px; background: #333; transform: skewX(-28deg); }
.tab.on { background: #000; color: #fff; clip-path: polygon(0 0, 100% 0, 86% 100%, 14% 100%); }

/* Command window */
.command { display: grid; grid-template-columns: 13px 1fr 36px 18px; grid-template-rows: 40px 15px; margin: 3px 4px 0 5px; background: #fff; font-size: 14px; line-height: 13px; }
.cgrip { grid-row: 1 / 3; background: linear-gradient(#555 0 1px, #999 1px 3px, #555 3px 4px, #a0a0a0 4px); }
.history { grid-column: 2 / 4; padding-left: 4px; border-bottom: 1px solid #aaa; }
.history p { white-space: pre; height: 13px; }
.vscroll { display: flex; flex-direction: column; justify-content: space-between; }
.vscroll button, .hscroll button { width: 17px; height: 15px; background: #c5d4fb; }
.vscroll svg, .hscroll svg { width: 14px; height: 14px; }
.prompt { grid-column: 2; display: flex; align-items: center; padding-left: 4px; white-space: pre; }
.prompt input { flex: 1; height: 13px; min-width: 0; }
.hscroll { grid-column: 3 / 5; display: flex; background: #eeecdf; padding-left: 17px; }

/* Status bar */
.status { position: relative; display: flex; align-items: center; height: 23px; padding: 0 4px 0 15px; background: linear-gradient(#8e8e8e, #727272); }
.status output { width: 147px; color: #a2a2a2; font-size: 10px; }
.toggles, .views, .scales, .tray { display: flex; align-items: center; }
.status button { width: 22px; height: 20px; background: linear-gradient(#b6b6b6, #8c8c8c); border-right: 1px solid #555; }
.status .i { width: 17px; height: 17px; }
.status .on { background: linear-gradient(#c9edf9, #7fbfd6); }
.status .lit { background: #b4bcc0; }
.views { margin-left: auto; }
.space { width: 17px; }
.status .name { width: 30px; font-size: 12px; }
.scales { padding: 0 4px 0 19px; }
.status .ratio { width: 37px; }
.status .arrow { width: 10px; background: none; }
.sizer { width: 12px; height: 12px; margin: 6px 0 0 5px; fill: #c8c8c8; }
.stamp { position: absolute; right: 56px; bottom: 8px; width: 178px; height: 56px; display: flex; padding: 6px 0 0 4px; gap: 6px; background: rgba(255, 255, 255, 0.9); }
.stamp svg { width: 74px; height: 40px; flex: none; }
.stamp strong, .stamp b { display: block; white-space: nowrap; }
.stamp strong { color: #8e4a40; font: bold 12px/20px "Liberation Serif", "Noto Sans CJK SC", serif; padding-top: 3px; }
.stamp b { color: #23729e; font: bold 11px/15px "Liberation Sans", sans-serif; }
```
